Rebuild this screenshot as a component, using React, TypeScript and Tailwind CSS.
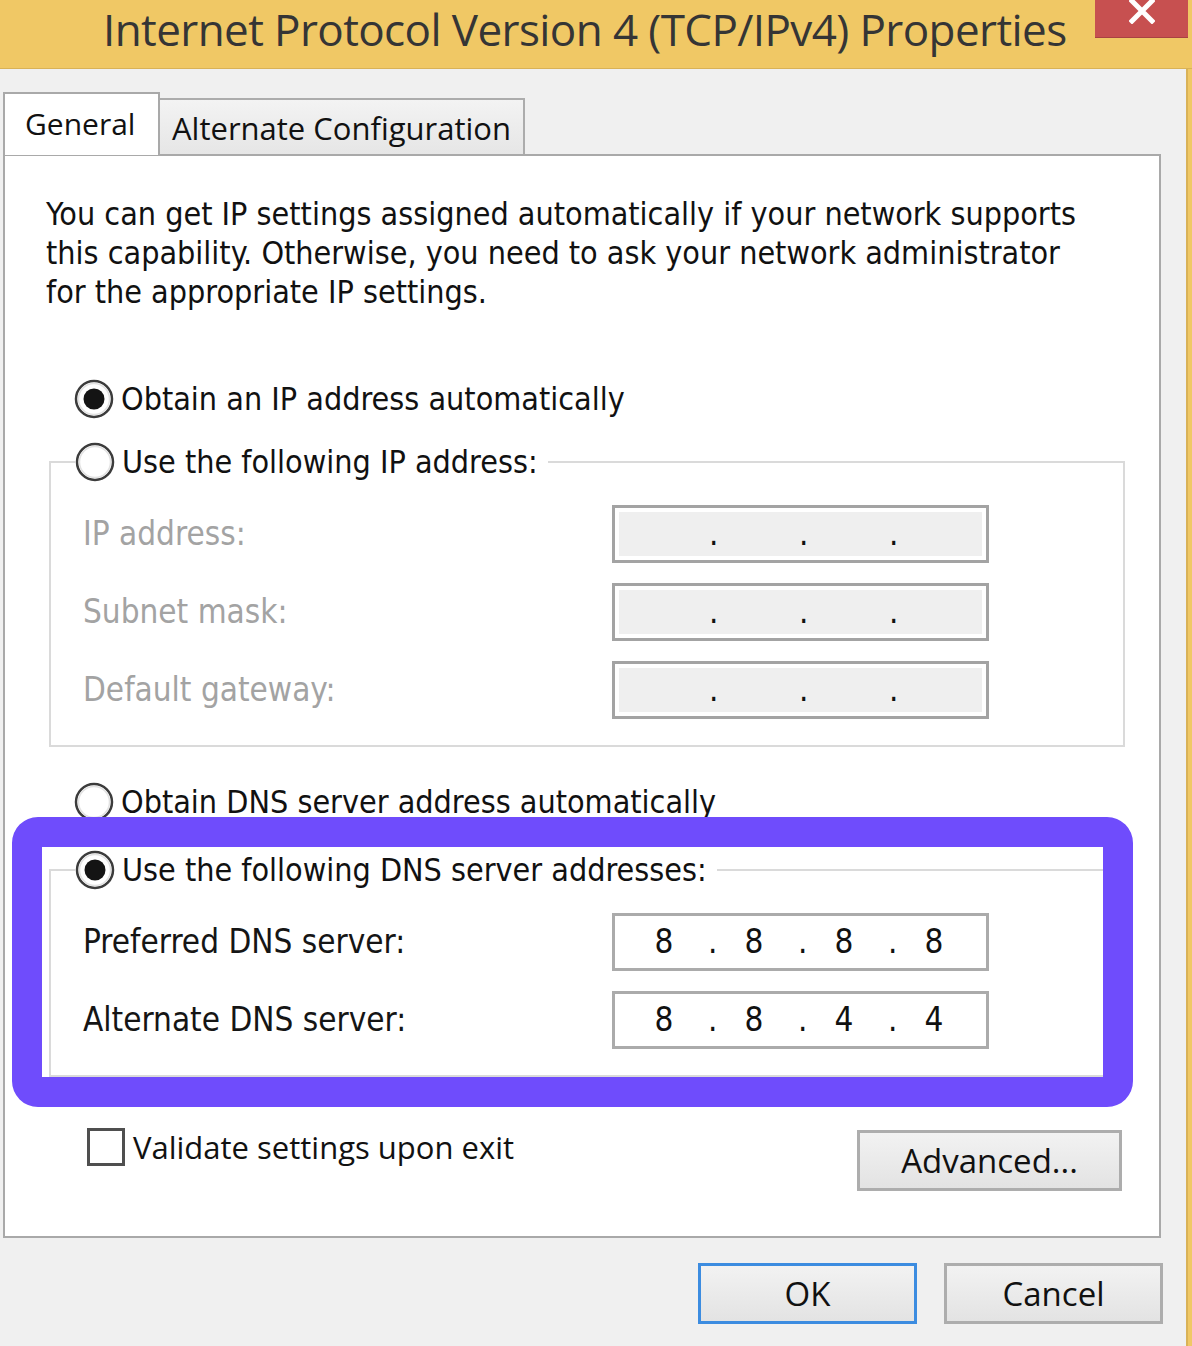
import React from "react";

const seg = "font-['Open_Sans','Noto_Sans',sans-serif]";
const tah = "font-['DejaVu_Sans_Condensed','DejaVu_Sans',sans-serif]";

function Radio({ checked }: { checked?: boolean }) {
  return (
    <svg width="40" height="40" viewBox="0 0 40 40" className="shrink-0">
      <circle cx="20" cy="20" r="18" fill="#fff" stroke="#3c3c3c" strokeWidth="2.5" />
      <circle cx="20" cy="20" r="15.5" fill="none" stroke="#e2e2e2" strokeWidth="1.5" />
      {checked && <circle cx="20" cy="20" r="10.5" fill="#141414" />}
    </svg>
  );
}

function Cells({ parts, pad }: { parts: string[]; pad: string }) {
  return (
    <div className={`flex items-center h-full ${pad} text-[33px] text-[#111] ${tah}`}>
      {parts.map((p, i) => (
        <React.Fragment key={i}>
          <span className="w-[20px] text-center">{p}</span>
          {i < 3 && <span className="w-[8px] ml-[34px] mr-[28px] text-center">.</span>}
        </React.Fragment>
      ))}
    </div>
  );
}

function IpBox({ parts, disabled }: { parts: string[]; disabled?: boolean }) {
  if (disabled) {
    return (
      <div className="w-[377px] h-[58px] border-[3px] border-[#a3a3a3] bg-white p-[4px]">
        <div className="h-full bg-[#efefef]">
          <Cells parts={parts} pad="pl-[36px]" />
        </div>
      </div>
    );
  }
  return (
    <div className="w-[377px] h-[58px] border-[3px] border-[#ababab] bg-white">
      <Cells parts={parts} pad="pl-[39px]" />
    </div>
  );
}

function Row({ label, parts, disabled }: { label: string; parts: string[]; disabled?: boolean }) {
  return (
    <div className="grid grid-cols-[529px_377px] items-center h-[58px]">
      <span className={`text-[33px] ${tah} ${disabled ? "text-[#a3a3a3]" : "text-[#151515]"}`}>{label}</span>
      <IpBox parts={parts} disabled={disabled} />
    </div>
  );
}

function Legend({ checked, text }: { checked?: boolean; text: string }) {
  return (
    <legend className="ml-[24px] pr-[10px]">
      <span className="flex items-center h-[50px] gap-[7px]">
        <Radio checked={checked} />
        <span className={`text-[32px] text-[#111] ${tah}`}>{text}</span>
      </span>
    </legend>
  );
}

function Btn({ label, primary, w }: { label: string; primary?: boolean; w: string }) {
  return (
    <div
      className={`${w} h-[61px] flex items-center justify-center bg-gradient-to-b from-[#f2f2f2] to-[#e3e3e3] text-[33px] text-[#111] ${seg} ${
        primary ? "border-[3px] border-[#3c8ce0]" : "border-[3px] border-[#adadad]"
      }`}
    >
      {label}
    </div>
  );
}

export default function App() {
  return (
    <div className="relative w-[1192px] h-[1346px] overflow-hidden bg-[#f0c865] flex flex-col">
      {/* title bar */}
      <div className="h-[69px] flex justify-between items-start border-b border-[#d9b257]">
        <span className={`pl-[103px] text-[44px] leading-[58px] tracking-[-0.6px] text-[#353535] ${seg}`}>
          Internet Protocol Version 4 (TCP/IPv4) Properties
        </span>
        <div className="w-[93px] h-[38px] mr-[4px] bg-[#c75050] flex items-start justify-center border-b border-[#a84242]">
          <svg width="26" height="24" viewBox="0 0 26 24">
            <path d="M3 1 L23 21 M23 1 L3 21" stroke="#fff" strokeWidth="5" strokeLinecap="square" />
          </svg>
        </div>
      </div>

      <div className="flex-1 flex">
        <div className="flex-1 bg-[#f0f0f0] pt-[23px] flex flex-col">
          {/* tabs */}
          <div className="flex items-end ml-[3px]">
            <div className={`relative z-10 -mb-px w-[157px] h-[63px] bg-white border-[2px] border-b-0 border-[#a9a9a9] flex items-center pl-[20px] pb-[2px] text-[30px] text-[#111] ${seg}`}>
              General
            </div>
            <div className={`w-[365px] h-[56px] bg-gradient-to-b from-[#f3f3f3] to-[#e6e6e6] border-[2px] border-l-0 border-b-0 border-[#acacac] flex items-center pl-[12px] pt-[2px] text-[31px] text-[#111] ${seg}`}>
              Alternate Configuration
            </div>
          </div>

          {/* panel */}
          <div className="ml-[3px] w-[1158px] h-[1084px] bg-white border-[2px] border-[#a9a9a9] flex flex-col pt-[39px]">
            <p className={`pl-[41px] text-[32px] leading-[39px] text-[#111] whitespace-nowrap ${tah}`}>
              You can get IP settings assigned automatically if your network supports
              <br />
              this capability. Otherwise, you need to ask your network administrator
              <br />
              for the appropriate IP settings.
            </p>

            <div className="mt-[62px] h-[50px] flex items-center gap-[7px] pl-[69px]">
              <Radio checked />
              <span className={`text-[32px] text-[#111] ${tah}`}>Obtain an IP address automatically</span>
            </div>

            <fieldset className="mt-[13px] ml-[44px] w-[1076px] border-2 border-[#dadada]">
              <Legend text="Use the following IP address:" />
              <div className="pl-[32px] pt-[18px] pb-[26px] flex flex-col gap-[20px]">
                <Row label="IP address:" parts={["", "", "", ""]} disabled />
                <Row label="Subnet mask:" parts={["", "", "", ""]} disabled />
                <Row label="Default gateway:" parts={["", "", "", ""]} disabled />
              </div>
            </fieldset>

            <div className="mt-[30px] h-[50px] flex items-center gap-[7px] pl-[69px]">
              <Radio />
              <span className={`text-[32px] text-[#111] ${tah}`}>Obtain DNS server address automatically</span>
            </div>

            <fieldset className="mt-[18px] ml-[44px] w-[1076px] border-2 border-[#dadada]">
              <Legend checked text="Use the following DNS server addresses:" />
              <div className="pl-[32px] pt-[18px] pb-[26px] flex flex-col gap-[20px]">
                <Row label="Preferred DNS server:" parts={["8", "8", "8", "8"]} />
                <Row label="Alternate DNS server:" parts={["8", "8", "4", "4"]} />
              </div>
            </fieldset>

            <div className="mt-[51px] flex justify-between items-start pl-[82px] pr-[37px]">
              <div className="flex items-center gap-[8px] h-[38px]">
                <div className="w-[38px] h-[38px] border-[3px] border-[#4f4f4f] bg-white" />
                <span className={`text-[31px] text-[#111] ${seg}`}>Validate settings upon exit</span>
              </div>
              <div className="mt-[2px]">
                <Btn label="Advanced..." w="w-[265px]" />
              </div>
            </div>
          </div>

          {/* dialog buttons */}
          <div className="mt-[25px] flex justify-end gap-[27px] pr-[23px]">
            <Btn label="OK" primary w="w-[219px]" />
            <Btn label="Cancel" w="w-[219px]" />
          </div>
        </div>
        <div className="w-[6px] border-l-2 border-[#d9b257] bg-[#f0c865]" />
      </div>

      {/* highlight drawn over the DNS group */}
      <div className="absolute left-[12px] top-[817px] w-[1121px] h-[290px] border-[30px] border-[#6f4cfc] rounded-[26px]" />
    </div>
  );
}
